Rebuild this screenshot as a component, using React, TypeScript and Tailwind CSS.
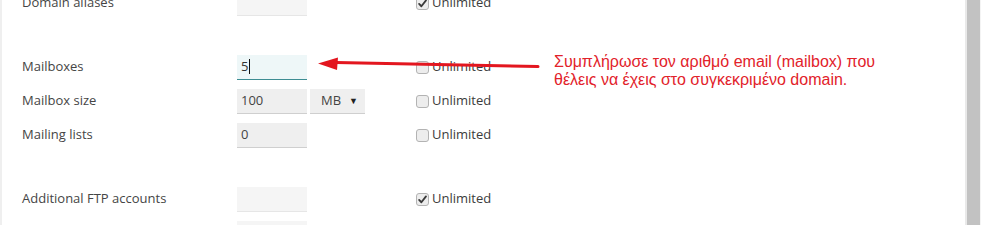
import React from 'react';

type Row = {
  label: string;
  value?: string;
  unlimited: boolean;
  focused?: boolean;
  unit?: string;
  noCheck?: boolean;
};

const font = { fontFamily: '"Open Sans", "Liberation Sans", sans-serif' };

const Checkbox: React.FC<{ checked: boolean }> = ({ checked }) => (
  <span className="inline-flex h-[13px] w-[13px] items-center justify-center rounded-[3px] border border-[#b3b3b3] bg-[#ededed]">
    {checked && (
      <svg viewBox="0 0 12 12" className="h-[11px] w-[11px]">
        <path d="M2.3 6.4 L4.8 9 L9.8 2.6" fill="none" stroke="#3a3a3a" strokeWidth="2" strokeLinecap="round" strokeLinejoin="round" />
      </svg>
    )}
  </span>
);

const FieldRow: React.FC<{ row: Row }> = ({ row }) => {
  const disabled = row.unlimited;
  return (
    <div className="flex h-[34px] items-center">
      <div className="w-[235px] pl-[20px] text-[13px] text-[#454545]">{row.label}</div>
      <div className="flex w-[179px] items-center gap-[3px]">
        <div
          className={
            row.focused
              ? 'flex h-[25px] w-[70px] items-center border-b border-[#3d8d93] bg-[#eef7f8] pl-[4px] text-[13px] text-[#333]'
              : disabled
              ? 'flex h-[25px] w-[70px] items-center border-b border-[#e6e6e6] bg-[#f5f5f5] pl-[4px] text-[13px] text-[#333]'
              : 'flex h-[25px] w-[70px] items-center border-b border-[#cfcfcf] bg-[#efefef] pl-[4px] text-[13px] text-[#444]'
          }
        >
          {row.value}
          {row.focused && <span className="ml-[1px] h-[15px] w-px bg-[#111]" />}
        </div>
        {row.unit && (
          <div className="flex h-[25px] w-[55px] items-center justify-between border-b border-[#cfcfcf] bg-[#efefef] pl-[11px] pr-[7px] text-[13px] text-[#444]">
            <span>{row.unit}</span>
            <span className="text-[9px] text-[#222]">▼</span>
          </div>
        )}
      </div>
      {!row.noCheck && (
        <label className="flex items-center gap-[3px] text-[13px] text-[#3c3c3c]">
          <Checkbox checked={row.unlimited} />
          <span>Unlimited</span>
        </label>
      )}
    </div>
  );
};

const Spacer = () => <div className="h-[30px]" />;

export default function App() {
  return (
    <div className="flex h-[225px] w-[981px] overflow-hidden bg-white" style={font}>
      <div className="w-[2px] bg-[#efefef]" />
      <div className="relative flex-1">
        <div className="mt-[-14px] flex flex-col">
          <FieldRow row={{ label: 'Domain aliases', unlimited: true }} />
          <Spacer />
          <FieldRow row={{ label: 'Mailboxes', value: '5', unlimited: false, focused: true }} />
          <FieldRow row={{ label: 'Mailbox size', value: '100', unit: 'MB', unlimited: false }} />
          <FieldRow row={{ label: 'Mailing lists', value: '0', unlimited: false }} />
          <Spacer />
          <FieldRow row={{ label: 'Additional FTP accounts', unlimited: true }} />
          <FieldRow row={{ label: '', unlimited: true, noCheck: true }} />
        </div>

        {/* annotation arrow */}
        <svg className="absolute left-[314px] top-[54px]" width="226" height="20" viewBox="0 0 226 20">
          <path d="M20 8.6 L222 12.6" stroke="#e3161f" strokeWidth="3" strokeLinecap="round" />
          <path d="M2 9.5 L22 3.5 L21 16 Z" fill="#e3161f" />
        </svg>
        <div
          className="absolute left-[552px] top-[53px] text-[16px] leading-[18px] text-[#e2222a]"
          style={{ fontFamily: '"Liberation Sans", Arial, sans-serif' }}
        >
          <div>Συμπλήρωσε τον αριθμό email (mailbox) που</div>
          <div>θέλεις να έχεις στο συγκεκριμένο domain.</div>
        </div>
      </div>
      <div className="flex w-[16px]">
        <div className="w-[2px] bg-[#e9e9e9]" />
        <div className="w-[13px] bg-[#c2c2c2]" />
        <div className="w-px bg-[#f4f4f4]" />
      </div>
    </div>
  );
}
